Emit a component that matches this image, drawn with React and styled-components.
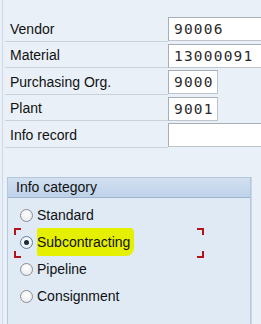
import React from 'react';
import styled, { createGlobalStyle } from 'styled-components';

const Global = createGlobalStyle`
  html, body {
    margin: 0;
    padding: 0;
    background: #e9f0f8;
    overflow: hidden;
  }
  body {
    font-family: "Liberation Sans", Arial, sans-serif;
    color: #111;
  }
`;

const Screen = styled.div`
  width: 261px;
  height: 324px;
  margin-left: 2px;
  border-left: 1px solid #cfd9e5;
  box-sizing: border-box;
  padding-top: 17px;
  overflow: hidden;
`;

const Fields = styled.div`
  display: flex;
  flex-direction: column;
`;

const Row = styled.div`
  display: flex;
  align-items: stretch;
  height: 26.5px;
`;

const Label = styled.div`
  flex-shrink: 0;
  width: 163px;
  margin-left: 2px;
  padding-left: 5px;
  box-sizing: border-box;
  font-size: 14px;
  display: flex;
  align-items: center;
  border-bottom: 1px solid #c9d1da;
  margin-bottom: 2px;
`;

const Input = styled.div`
  width: ${p => p.$width || 120}px;
  flex-shrink: 0;
  height: 24px;
  box-sizing: border-box;
  background: #fff;
  border: 1px solid #c0c5cb;
  border-top-color: #a8aeb5;
  border-left-color: #a8aeb5;
  font-family: "DejaVu Sans Mono", monospace;
  font-size: 14.5px;
  letter-spacing: 1.2px;
  padding-left: 5px;
  display: flex;
  align-items: center;
  color: #2a2a2a;
`;

const Group = styled.div`
  margin: 27px 0 0 4px;
  width: 242px;
  height: 160px;
  background: #dfeaf5;
  border: 1px solid #b4c7dc;
  border-bottom: none;
  box-shadow: 1px 0 0 #c9d6e4;
`;

const GroupHeader = styled.div`
  height: 19px;
  background: linear-gradient(#d2e0f0, #bed2e9);
  border-bottom: 1px solid #9db4cf;
  font-size: 14px;
  padding-left: 8px;
  display: flex;
  align-items: center;
`;

const Options = styled.div`
  display: flex;
  flex-direction: column;
  padding-top: 4px;
  padding-left: 12px;
`;

const Option = styled.div`
  position: relative;
  display: flex;
  align-items: center;
  gap: 4px;
  height: 27px;
  font-size: 14px;
`;

const Radio = styled.span`
  flex-shrink: 0;
  width: 13px;
  height: 13px;
  border-radius: 50%;
  box-sizing: border-box;
  border: 1px solid ${p => (p.$checked ? '#5c7fa8' : '#8c8f94')};
  background: radial-gradient(circle at 50% 35%, #ffffff, #e4e6e9);
  display: flex;
  align-items: center;
  justify-content: center;
  &::after {
    content: '';
    width: 5px;
    height: 5px;
    border-radius: 50%;
    background: #1d2a3a;
    display: ${p => (p.$checked ? 'block' : 'none')};
  }
`;

const Marker = styled.span`
  background: #e5f000;
  padding: 5px 4px 6px 0;
  margin: -5px 0 -6px 0;
  border-radius: 0 3px 8px 2px;
  box-shadow: 0 -2px 0 -1px #e5f000;
`;

const Corner = styled.span`
  position: absolute;
  width: 5px;
  height: 5px;
  border-color: #b3141c;
  border-style: solid;
  border-width: 0;
  ${p => (p.$top ? 'top: -1px; border-top-width: 2px;' : 'bottom: -2px; border-bottom-width: 2px;')}
  ${p => (p.$left ? 'left: -6px; border-left-width: 2px;' : 'left: 177px; border-right-width: 2px;')}
`;

const fields = [
  { label: 'Vendor', value: '90006', width: 120 },
  { label: 'Material', value: '13000091', width: 120 },
  { label: 'Purchasing Org.', value: '9000', width: 50 },
  { label: 'Plant', value: '9001', width: 50 },
  { label: 'Info record', value: '', width: 120 },
];

const categories = ['Standard', 'Subcontracting', 'Pipeline', 'Consignment'];

export default function App() {
  return (
    <>
      <Global />
      <Screen>
        <Fields>
          {fields.map(f => (
            <Row key={f.label}>
              <Label>{f.label}</Label>
              <Input $width={f.width}>{f.value}</Input>
            </Row>
          ))}
        </Fields>
        <Group>
          <GroupHeader>Info category</GroupHeader>
          <Options>
            {categories.map(c => {
              const checked = c === 'Subcontracting';
              return (
                <Option key={c}>
                  <Radio $checked={checked} />
                  {checked ? <Marker>{c}</Marker> : c}
                  {checked && (
                    <>
                      <Corner $top $left />
                      <Corner $left />
                      <Corner $top />
                      <Corner />
                    </>
                  )}
                </Option>
              );
            })}
          </Options>
        </Group>
      </Screen>
    </>
  );
}
